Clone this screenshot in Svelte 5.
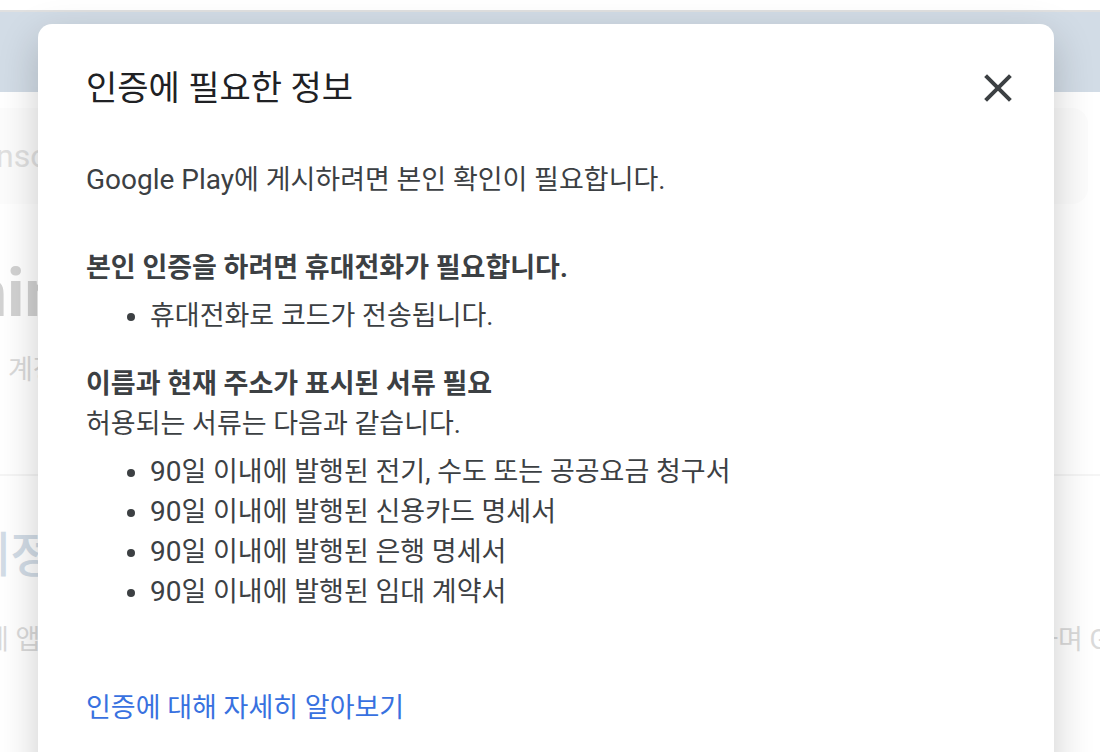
<script>
  let open = $state(true);

  const documents = [
    '일 이내에 발행된 전기, 수도 또는 공공요금 청구서',
    '일 이내에 발행된 신용카드 명세서',
    '일 이내에 발행된 은행 명세서',
    '일 이내에 발행된 임대 계약서'
  ];
</script>

<div class="screen">
  <div class="page" aria-hidden="true">
    <div class="band"></div>
    <div class="card">nso</div>
    <div class="heading">nin</div>
    <div class="account">계정</div>
    <div class="section">계정</div>
    <div class="row"><span>에 앱</span><span>하며 G</span></div>
  </div>

  {#if open}
    <div class="overlay">
      <div class="dialog" role="dialog" aria-modal="true" aria-labelledby="dialog-title">
        <header>
          <h1 id="dialog-title">인증에 필요한 정보</h1>
          <button type="button" aria-label="닫기" onclick={() => (open = false)}>
            <svg viewBox="0 0 32 32" width="32" height="32" aria-hidden="true">
              <path d="M3.6 3.6 28.4 28.4M28.4 3.6 3.6 28.4" fill="none" stroke="currentColor" stroke-width="4" />
            </svg>
          </button>
        </header>

        <p class="intro"><span class="latin">Google Play</span>에 게시하려면 본인 확인이 필요합니다.</p>

        <h2>본인 인증을 하려면 휴대전화가 필요합니다.</h2>
        <ul>
          <li>휴대전화로 코드가 전송됩니다.</li>
        </ul>

        <h2 class="next">이름과 현재 주소가 표시된 서류 필요</h2>
        <p>허용되는 서류는 다음과 같습니다.</p>
        <ul>
          {#each documents as document}
            <li><span class="latin">90</span>{document}</li>
          {/each}
        </ul>

        <a href="#learn-more">인증에 대해 자세히 알아보기</a>
      </div>
    </div>
  {/if}
</div>

<style>
  :global(body) {
    margin: 0;
    background: #fff;
  }

  .screen {
    display: grid;
    height: 100vh;
    overflow: hidden;
    font-family: Roboto, 'Noto Sans CJK KR', sans-serif;
    font-size: 27px;
    line-height: 40px;
    color: #3c4043;
  }

  .page,
  .overlay {
    grid-area: 1 / 1;
    min-width: 0;
  }

  .page {
    padding-top: 10px;
    color: #dadada;
    white-space: nowrap;
  }

  .band {
    height: 80px;
    border-top: 2px solid #e0e0e0;
    background: #d2dce6;
  }

  .card {
    margin: 16px 12px 0 -4px;
    padding: 28px 0;
    border-radius: 0 16px 16px 0;
    background: #fcfcfc;
    color: #e0e0e0;
    font-size: 32px;
  }

  .heading {
    margin: 50px 0 0 -30px;
    font-size: 66px;
    font-weight: 700;
    line-height: 80px;
    color: #d2d2d2;
  }

  .account {
    margin-top: 16px;
    padding: 0 0 84px 8px;
    border-bottom: 2px solid #f5f5f5;
  }

  .section {
    margin: 50px 0 0 -34px;
    font-size: 48px;
    font-weight: 500;
    line-height: 60px;
    color: #d2dce6;
  }

  .row {
    display: flex;
    justify-content: space-between;
    margin: 34px -8px 0 -16px;
  }

  .overlay {
    z-index: 1;
    padding: 24px 46px 0 38px;
  }

  .dialog {
    box-sizing: border-box;
    min-height: calc(100vh + 24px);
    padding: 40px 40px 48px 48px;
    border-radius: 14px;
    background: #fff;
    box-shadow: 0 14px 40px rgba(0, 0, 0, 0.2);
  }

  header {
    display: flex;
    justify-content: space-between;
    align-items: center;
  }

  h1,
  h2,
  p,
  ul {
    margin: 0;
  }

  h1 {
    font-size: 34px;
    font-weight: 400;
    line-height: 48px;
    color: #202124;
  }

  button {
    display: flex;
    padding: 0;
    border: 0;
    background: none;
    color: #3c4043;
    cursor: pointer;
  }

  .latin {
    font-size: 28px;
  }

  .intro {
    margin: 48px 0;
  }

  h2 {
    font-size: 27px;
    font-weight: 700;
    line-height: 40px;
  }

  .next {
    margin-top: 28px;
  }

  ul {
    margin-top: 8px;
    padding-left: 64px;
  }

  a {
    display: inline-block;
    margin-top: 76px;
    color: #3871e0;
    text-decoration: none;
  }
</style>
